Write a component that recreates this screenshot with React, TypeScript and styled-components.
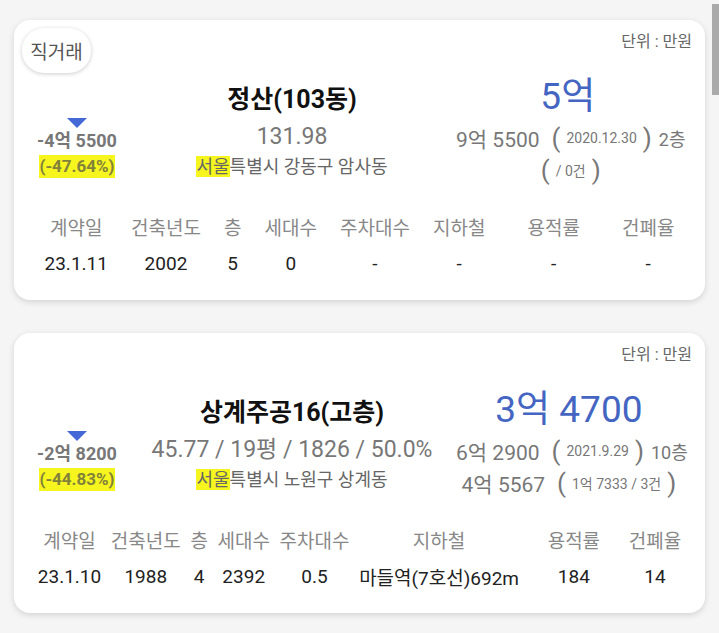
import styled, {createGlobalStyle} from 'styled-components'

const GlobalStyle = createGlobalStyle`
  html, body {
    margin: 0;
    padding: 0;
    background: #f5f5f5;
    font-family: Roboto, "Noto Sans CJK KR", sans-serif;
  }
`

interface Deal {
  badge?: string
  name: string
  spec: string
  city: string
  address: string
  diff: string
  rate: string
  price: string
  lines: {main: string, note: string, tail?: string}[]
  cells: string[]
}

// 용적률 gets a wider slot than the others
const columns = [
  {label: '계약일'},
  {label: '건축년도'},
  {label: '층'},
  {label: '세대수'},
  {label: '주차대수'},
  {label: '지하철'},
  {label: '용적률', wide: true},
  {label: '건폐율'},
]

const deals: Deal[] = [
  {
    badge: '직거래',
    name: '정산(103동)',
    spec: '131.98',
    city: '서울',
    address: '특별시 강동구 암사동',
    diff: '-4억 5500',
    rate: '(-47.64%)',
    price: '5억',
    lines: [
      {main: '9억 5500', note: '2020.12.30', tail: '2층'},
      {main: '', note: '/ 0건'},
    ],
    cells: ['23.1.11', '2002', '5', '0', '-', '-', '-', '-'],
  },
  {
    name: '상계주공16(고층)',
    spec: '45.77 / 19평 / 1826 / 50.0%',
    city: '서울',
    address: '특별시 노원구 상계동',
    diff: '-2억 8200',
    rate: '(-44.83%)',
    price: '3억 4700',
    lines: [
      {main: '6억 2900', note: '2021.9.29', tail: '10층'},
      {main: '4억 5567', note: '1억 7333 / 3건'},
    ],
    cells: ['23.1.10', '1988', '4', '2392', '0.5', '마들역(7호선)692m', '184', '14'],
  },
]

const DealCard = ({deal}: {deal: Deal}) => (
  <Card>
    {deal.badge && <Badge>{deal.badge}</Badge>}
    <Unit>단위 : 만원</Unit>

    <Summary>
      <Change>
        <Arrow />
        <Diff>{deal.diff}</Diff>
        <Rate>{deal.rate}</Rate>
      </Change>

      <Info>
        <Name>{deal.name}</Name>
        <Spec>{deal.spec}</Spec>
        <Address><Mark>{deal.city}</Mark>{deal.address}</Address>
      </Info>

      <Prices>
        <Price>{deal.price}</Price>
        {deal.lines.map((line, i) => (
          <PriceLine key={i}>
            {line.main && <Amount>{line.main}</Amount>}
            <Paren>(</Paren>
            <Note>{line.note}</Note>
            <Paren>)</Paren>
            {line.tail && <Tail>{line.tail}</Tail>}
          </PriceLine>
        ))}
      </Prices>
    </Summary>

    <Details>
      {columns.map(c => <Cell key={c.label} $head $wide={c.wide}>{c.label}</Cell>)}
      {deal.cells.map((v, i) => <Cell key={i} $wide={columns[i].wide}>{v}</Cell>)}
    </Details>
  </Card>
)

const App = () => (
  <Page>
    <GlobalStyle />
    {deals.map(d => <DealCard key={d.name} deal={d} />)}
    <ScrollThumb />
  </Page>
)

export default App

const Page = styled.div`
  display: flex;
  flex-direction: column;
  gap: 33px;
  padding: 20px 14px 40px;
`

const ScrollThumb = styled.div`
  position: fixed;
  top: 4px;
  right: 0;
  width: 7px;
  height: 91px;
  background: #aaaaaa;
`

const Card = styled.section`
  position: relative;
  background: #fff;
  border-radius: 16px;
  box-shadow: 0 2px 6px rgba(0, 0, 0, 0.14);
  padding: 12px 12px 18px;
`

const Badge = styled.div`
  position: absolute;
  top: 8px;
  left: 8px;
  width: 69px;
  height: 45px;
  display: flex;
  align-items: center;
  justify-content: center;
  border-radius: 22px;
  background: #fff;
  box-shadow: 0 1px 4px rgba(0, 0, 0, 0.2);
  font-size: 19px;
  color: #555;
`

const Unit = styled.div`
  text-align: right;
  font-size: 16px;
  line-height: 20px;
  color: #666;
  padding-right: 1px;
`

const Summary = styled.div`
  display: grid;
  grid-template-columns: 102px 328px 1fr;
  align-items: start;
  padding-right: 12px;
`

const Change = styled.div`
  padding-top: 66px;
  display: flex;
  flex-direction: column;
  align-items: center;
`

const Arrow = styled.div`
  width: 0;
  height: 0;
  border-left: 10px solid transparent;
  border-right: 10px solid transparent;
  border-top: 10px solid #4468d6;
`

const Diff = styled.div`
  font-size: 18px;
  font-weight: 700;
  line-height: 24px;
  color: #777;
  margin-top: 1px;
`

const Rate = styled.span`
  font-size: 17px;
  font-weight: 700;
  line-height: 23px;
  margin-top: 2px;
  color: #82823a;
  background: #f6f61e;
`

const Info = styled.div`
  padding-top: 31px;
  display: flex;
  flex-direction: column;
  align-items: center;
  white-space: nowrap;
`

const Name = styled.div`
  font-size: 25px;
  font-weight: 700;
  line-height: 34px;
  color: #111;
`

const Spec = styled.div`
  font-size: 23px;
  line-height: 36px;
  margin-top: 2px;
  color: #777;
`

const Address = styled.div`
  font-size: 18px;
  line-height: 24px;
  color: #666;
`

const Mark = styled.span`
  background: #f6f61e;
`

const Prices = styled.div`
  padding-top: 20px;
  display: flex;
  flex-direction: column;
  align-items: center;
`

const Price = styled.div`
  font-size: 37px;
  line-height: 50px;
  color: #4466c2;
  margin-right: 6px;
`

const PriceLine = styled.div`
  height: 32px;
  display: flex;
  align-items: center;
  font-size: 21px;
  color: #777;
  white-space: nowrap;
`

const Amount = styled.span`
  margin-right: 6px;
`

const Paren = styled.span`
  font-size: 26px;
  margin: 0 6px;
`

const Note = styled.span`
  font-size: 14px;
`

const Tail = styled.span`
  font-size: 18px;
  margin-left: 1px;
`

const Details = styled.div`
  display: grid;
  grid-template-columns: repeat(8, auto);
  grid-template-rows: 38px 37px;
  margin: 21px 7px 0;
`

const Cell = styled.div<{$head?: boolean, $wide?: boolean}>`
  display: flex;
  align-items: center;
  justify-content: center;
  padding: 0 ${p => p.$wide ? '19px' : '0'};
  font-size: 19px;
  white-space: nowrap;
  color: ${p => p.$head ? '#888' : '#222'};
`
